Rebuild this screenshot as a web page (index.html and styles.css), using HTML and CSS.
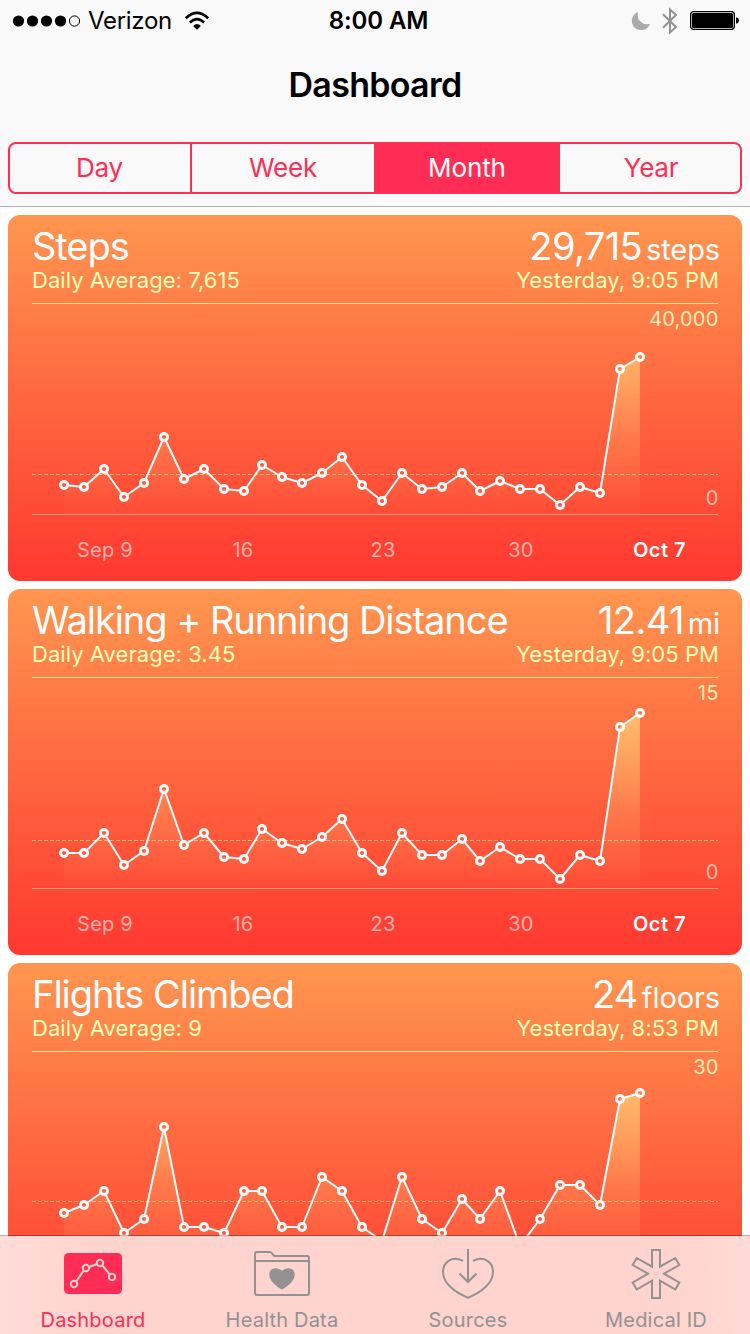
FILE: index.html
```html
<!DOCTYPE html>
<html lang="en">
<head>
<meta charset="utf-8">
<title>Dashboard</title>
<link rel="stylesheet" href="styles.css">
</head>
<body>
<svg class="defs" width="0" height="0" aria-hidden="true">
  <defs>
    <marker id="disc" markerUnits="userSpaceOnUse" markerWidth="12" markerHeight="12" refX="6" refY="6"><circle cx="6" cy="6" r="5" fill="#fff"/></marker>
    <marker id="hole" markerUnits="userSpaceOnUse" markerWidth="12" markerHeight="12" refX="6" refY="6"><circle cx="6" cy="6" r="2.1" fill="#000"/></marker>
  </defs>
</svg>

<header class="header">
  <div class="status">
    <div class="status-side">
      <svg class="signal" width="70" height="14" viewBox="0 0 70 14"><circle cx="6.5" cy="7" r="5.6"/><circle cx="20.5" cy="7" r="5.6"/><circle cx="34.5" cy="7" r="5.6"/><circle cx="48.5" cy="7" r="5.6"/><circle cx="62.5" cy="7" r="5.1" fill="none" stroke="#000"/></svg>
      <span class="carrier">Verizon</span>
      <svg class="wifi" width="26" height="20" viewBox="0 0 26 20"><g fill="none" stroke="#000" stroke-width="2.7"><path d="M1.8 7.3Q13-3.5 24.2 7.3"/><path d="M5.9 11.6Q13 4.8 20.1 11.6"/></g><path d="M9.1 14.9Q13 11.3 16.9 14.9L13 18.8Z"/></svg>
    </div>
    <span class="clock">8:00 AM</span>
    <div class="status-side status-end">
      <svg width="20" height="20" viewBox="0 0 20 20"><path d="M7.2 1A9.3 9.3 0 1 0 19 12.7A9.2 9.2 0 0 1 7.2 1Z" fill="#aaa"/></svg>
      <svg class="bluetooth" width="18" height="28" viewBox="0 0 18 28"><path d="M2 7.3L15 20L9 25.5V2.5L15 8L2 20.7" fill="none" stroke="#929292" stroke-width="2"/></svg>
      <svg width="50" height="20" viewBox="0 0 50 20"><rect x=".65" y=".65" width="43.7" height="17.7" rx="3" fill="none" stroke="#000" stroke-width="1.3"/><rect x="2" y="2" width="41" height="15" rx="1.5"/><path d="M46 6.5h1q2 .6 2 3t-2 3h-1z"/></svg>
    </div>
  </div>
  <h1 class="page-title">Dashboard</h1>
  <nav class="segments">
    <span class="segment">Day</span>
    <span class="segment">Week</span>
    <span class="segment segment-active">Month</span>
    <span class="segment">Year</span>
  </nav>
</header>

<main class="cards">
  <section class="card">
    <div class="card-head">
      <div class="row"><h2 class="name">Steps</h2><p class="value">29,715<span class="unit">steps</span></p></div>
      <div class="row detail"><span>Daily Average: 7,615</span><span>Yesterday, 9:05 PM</span></div>
    </div>
    <svg class="chart" viewBox="8 304 734 277">
      <linearGradient id="area1" gradientUnits="userSpaceOnUse" x1="0" y1="330" x2="0" y2="518"><stop class="area-top" offset="0"/><stop class="area-middle" offset=".57"/><stop class="area-bottom" offset="1"/></linearGradient>
      <polygon fill="url(#area1)" points="64,514 64,485 84,487 104,469 124,497 144,483 164,437 184,479 204,469 224,489 244,491 262,465 282,477 302,483 322,473 342,457 362,485 382,501 402,473 422,489 442,487 462,473 480,491 500,481 520,489 540,489 560,505 580,487 600,493 620,369 640,357 640,514"/>
      <path class="average" d="M32 474.5H718"/>
      <path class="baseline" d="M32 514.5H718"/>
      <mask id="mask1" maskUnits="userSpaceOnUse" x="8" y="304" width="734" height="277"><rect x="8" y="304" width="734" height="277" fill="#fff"/><polyline class="holes" points="64,485 84,487 104,469 124,497 144,483 164,437 184,479 204,469 224,489 244,491 262,465 282,477 302,483 322,473 342,457 362,485 382,501 402,473 422,489 442,487 462,473 480,491 500,481 520,489 540,489 560,505 580,487 600,493 620,369 640,357"/></mask>
      <g mask="url(#mask1)"><polyline class="line" points="64,485 84,487 104,469 124,497 144,483 164,437 184,479 204,469 224,489 244,491 262,465 282,477 302,483 322,473 342,457 362,485 382,501 402,473 422,489 442,487 462,473 480,491 500,481 520,489 540,489 560,505 580,487 600,493 620,369 640,357"/></g>
      <text class="scale" x="718.5" y="326">40,000</text>
      <text class="scale scale-min" x="718.5" y="505">0</text>
      <text class="date" x="105" y="557">Sep 9</text><text class="date" x="243" y="557">16</text><text class="date" x="383" y="557">23</text><text class="date" x="521" y="557">30</text><text class="date date-now" x="659.5" y="557">Oct 7</text>
    </svg>
  </section>

  <section class="card">
    <div class="card-head">
      <div class="row"><h2 class="name">Walking + Running Distance</h2><p class="value">12.41<span class="unit">mi</span></p></div>
      <div class="row detail"><span>Daily Average: 3.45</span><span>Yesterday, 9:05 PM</span></div>
    </div>
    <svg class="chart" viewBox="8 678 734 277">
      <linearGradient id="area2" gradientUnits="userSpaceOnUse" x1="0" y1="704" x2="0" y2="892"><stop class="area-top" offset="0"/><stop class="area-middle" offset=".57"/><stop class="area-bottom" offset="1"/></linearGradient>
      <polygon fill="url(#area2)" points="64,888 64,853 84,853 104,833 124,865 144,851 164,789 184,845 204,833 224,857 244,859 262,829 282,843 302,849 322,837 342,819 362,853 382,871 402,833 422,855 442,855 462,839 480,861 500,847 520,859 540,859 560,879 580,855 600,861 620,727 640,713 640,888"/>
      <path class="average" d="M32 840.5H718"/>
      <path class="baseline" d="M32 888.5H718"/>
      <mask id="mask2" maskUnits="userSpaceOnUse" x="8" y="678" width="734" height="277"><rect x="8" y="678" width="734" height="277" fill="#fff"/><polyline class="holes" points="64,853 84,853 104,833 124,865 144,851 164,789 184,845 204,833 224,857 244,859 262,829 282,843 302,849 322,837 342,819 362,853 382,871 402,833 422,855 442,855 462,839 480,861 500,847 520,859 540,859 560,879 580,855 600,861 620,727 640,713"/></mask>
      <g mask="url(#mask2)"><polyline class="line" points="64,853 84,853 104,833 124,865 144,851 164,789 184,845 204,833 224,857 244,859 262,829 282,843 302,849 322,837 342,819 362,853 382,871 402,833 422,855 442,855 462,839 480,861 500,847 520,859 540,859 560,879 580,855 600,861 620,727 640,713"/></g>
      <text class="scale" x="718.5" y="700">15</text>
      <text class="scale scale-min" x="718.5" y="879">0</text>
      <text class="date" x="105" y="931">Sep 9</text><text class="date" x="243" y="931">16</text><text class="date" x="383" y="931">23</text><text class="date" x="521" y="931">30</text><text class="date date-now" x="659.5" y="931">Oct 7</text>
    </svg>
  </section>

  <section class="card">
    <div class="card-head">
      <div class="row"><h2 class="name">Flights Climbed</h2><p class="value">24<span class="unit">floors</span></p></div>
      <div class="row detail"><span>Daily Average: 9</span><span>Yesterday, 8:53 PM</span></div>
    </div>
    <svg class="chart" viewBox="8 1052 734 277">
      <linearGradient id="area3" gradientUnits="userSpaceOnUse" x1="0" y1="1078" x2="0" y2="1266"><stop class="area-top" offset="0"/><stop class="area-middle" offset=".57"/><stop class="area-bottom" offset="1"/></linearGradient>
      <polygon fill="url(#area3)" points="64,1262 64,1213 84,1205 104,1191 124,1233 144,1219 164,1127 184,1227 204,1227 224,1233 244,1191 262,1191 282,1227 302,1227 322,1177 342,1191 362,1227 382,1241 402,1177 422,1219 442,1233 462,1199 480,1219 500,1191 520,1246 540,1219 560,1185 580,1185 600,1205 620,1099 640,1093 640,1262"/>
      <path class="average" d="M32 1201.5H718"/>
      <mask id="mask3" maskUnits="userSpaceOnUse" x="8" y="1052" width="734" height="277"><rect x="8" y="1052" width="734" height="277" fill="#fff"/><polyline class="holes" points="64,1213 84,1205 104,1191 124,1233 144,1219 164,1127 184,1227 204,1227 224,1233 244,1191 262,1191 282,1227 302,1227 322,1177 342,1191 362,1227 382,1241 402,1177 422,1219 442,1233 462,1199 480,1219 500,1191 520,1246 540,1219 560,1185 580,1185 600,1205 620,1099 640,1093"/></mask>
      <g mask="url(#mask3)"><polyline class="line" points="64,1213 84,1205 104,1191 124,1233 144,1219 164,1127 184,1227 204,1227 224,1233 244,1191 262,1191 282,1227 302,1227 322,1177 342,1191 362,1227 382,1241 402,1177 422,1219 442,1233 462,1199 480,1219 500,1191 520,1246 540,1219 560,1185 580,1185 600,1205 620,1099 640,1093"/></g>
      <text class="scale" x="718.5" y="1074">30</text>
    </svg>
  </section>
</main>

<nav class="tabs">
  <div class="tab tab-active">
    <svg width="60" height="54" viewBox="0 0 60 54"><rect x="1" y="7" width="58" height="41" rx="4.5" fill="#ff2d55"/><g fill="none" stroke="#ffd3ce" stroke-width="2"><path d="M13.2 35.4L20.9 24.4M26 21L34 18M39.3 19.4L46.7 28.4"/><circle cx="11" cy="38" r="3.2"/><circle cx="23" cy="22" r="3.2"/><circle cx="37" cy="17" r="3.2"/><circle cx="49" cy="31" r="3.2"/></g></svg>
    <span>Dashboard</span>
  </div>
  <div class="tab">
    <svg width="60" height="54" viewBox="0 0 60 54"><g fill="none" stroke="#929292" stroke-width="2"><path d="M3 47V8Q3 6 5 6H18C21 6 20 10 23 10H55Q57 10 57 12V47Q57 49 55 49H5Q3 49 3 47Z"/><path d="M3 15H57"/></g><path d="M30 43.500C25 41 17.300 35 17.300 28.500C17.300 21.500 25.500 20.500 30 25C34.500 20.500 42.700 21.500 42.700 28.500C42.700 35 35 41 30 43.500Z" fill="#929292"/></svg>
    <span>Health Data</span>
  </div>
  <div class="tab">
    <svg width="60" height="54" viewBox="0 0 60 54"><g fill="none" stroke="#929292" stroke-width="2"><path d="M25 14.800C14 9.500 5 16 5 26C5 38 18 47 30 51.700C42 47 55 38 55 26C55 16 46 9.500 35 14.800"/><path d="M30 3V35M21.500 27.500L30 36L38.500 27.500"/></g></svg>
    <span>Sources</span>
  </div>
  <div class="tab">
    <svg width="60" height="54" viewBox="0 0 60 54"><path d="M26 4H34V20.700L49.300 12L53.300 19L38 27.700L53.300 36.500L49.300 43.500L34 34.700V52H26V34.700L10.700 43.500L6.700 36.500L22 27.700L6.700 19L10.700 12L26 20.700Z" fill="none" stroke="#929292" stroke-width="2"/></svg>
    <span>Medical ID</span>
  </div>
</nav>
</body>
</html>
```
FILE: styles.css
```css
* { box-sizing: border-box; }
body {
  margin: 0;
  width: 750px;
  height: 1334px;
  display: flex;
  flex-direction: column;
  overflow: hidden;
  background: #fff;
  font-family: Inter, "Liberation Sans", sans-serif;
  color: #000;
}
h1, h2, p { margin: 0; font-weight: 400; }
svg { display: block; flex: none; }
.defs { position: absolute; }

.header {
  height: 207px;
  flex: none;
  background: #f9f9f9;
  border-bottom: 1px solid #b2b2b2;
}
.status {
  height: 41px;
  padding: 0 10px 0 12px;
  display: grid;
  grid-template-columns: 1fr auto 1fr;
  align-items: center;
}
.status-side { display: flex; align-items: center; }
.status-end { justify-content: flex-end; gap: 10px; }
.bluetooth { margin-right: 1px; }
.carrier { margin-left: 6px; font-size: 24px; line-height: 28px; padding-top: 1px; letter-spacing: -.3px; }
.wifi { margin-left: 12px; }
.clock { margin-left: 5px; font-size: 24px; line-height: 28px; padding-top: 1px; font-weight: 600; letter-spacing: -.1px; }
.page-title {
  height: 87px;
  line-height: 87px;
  text-align: center;
  font-size: 34px;
  font-weight: 600;
  letter-spacing: -.7px;
}
.segments {
  margin: 14px 8px 0;
  height: 52px;
  display: grid;
  grid-template-columns: 182px 182px 186px 1fr;
  border: 2px solid #ff2d55;
  border-radius: 8px;
}
.segment {
  line-height: 48px;
  text-align: center;
  font-size: 26px;
  letter-spacing: -.25px;
  color: #ff2d55;
}
.segment:first-child { border-right: 2px solid #ff2d55; padding-right: 1px; }
.segment-active { background: #ff2d55; color: #fff; letter-spacing: -.1px; }
.segment:last-child { padding-left: 2px; }

.cards {
  flex: 1;
  min-height: 0;
  margin-bottom: -1px;
  padding: 8px 8px 0;
  display: flex;
  flex-direction: column;
  gap: 8px;
  overflow: hidden;
}
.card {
  flex: none;
  height: 366px;
  border-radius: 12px;
  color: #fff;
  background: linear-gradient(#ff9650, #ff3830);
}
.card-head {
  height: 89px;
  margin: 0 24px;
  padding-top: 7px;
  border-bottom: 1px solid #ffe48e;
}
.row { display: flex; justify-content: space-between; white-space: nowrap; }
.name, .value { height: 46px; font-size: 38px; line-height: 48px; }
.name { letter-spacing: -1.05px; }
.value { letter-spacing: -.6px; margin-right: -2px; }
.unit { margin-left: 4px; font-size: 29px; line-height: 1; letter-spacing: -.1px; }
.detail { margin-right: -1px; font-size: 22px; line-height: 24px; letter-spacing: .05px; color: #ffffb9; }
.chart { width: 734px; height: 277px; }
.chart text { font-size: 20px; letter-spacing: .2px; }
.scale { text-anchor: end; fill: #ffffc4; fill-opacity: .9; }
.chart .scale-min { fill: #fff0d8; fill-opacity: .7; }
.date { text-anchor: middle; fill: #fff; fill-opacity: .6; }
.chart .date-now { font-weight: 600; fill-opacity: 1; letter-spacing: .5px; }
.area-top { stop-color: #ffea86; stop-opacity: .66; }
.area-middle { stop-color: #ffea86; stop-opacity: .2; }
.area-bottom { stop-color: #ffea86; stop-opacity: 0; }
.average { stroke: #ffee98; stroke-opacity: .6; stroke-dasharray: 4 2; }
.baseline { stroke: #ffee98; stroke-opacity: .5; }
.line {
  fill: none;
  stroke: #fff;
  stroke-width: 2;
  stroke-linejoin: round;
  marker: url(#disc);
}
.holes { fill: none; marker: url(#hole); }

.tabs {
  position: relative;
  flex: none;
  height: 99px;
  display: grid;
  grid-template-columns: 186px 190px 184px 190px;
  border-top: 1px solid rgba(0, 0, 0, .3);
  background: linear-gradient(90deg, #ffdcd8, #ffd3ce 14%, #ffd3ce 88%, #ffdad6) padding-box;
}
.tab {
  display: flex;
  flex-direction: column;
  align-items: center;
  padding-top: 10px;
  font-size: 20px;
  line-height: 24px;
  letter-spacing: .2px;
  color: #929292;
}
.tab:nth-child(even) { padding-left: 2px; }
.tab span { margin-top: 8px; }
.tab-active { color: #ff2d55; }
```
